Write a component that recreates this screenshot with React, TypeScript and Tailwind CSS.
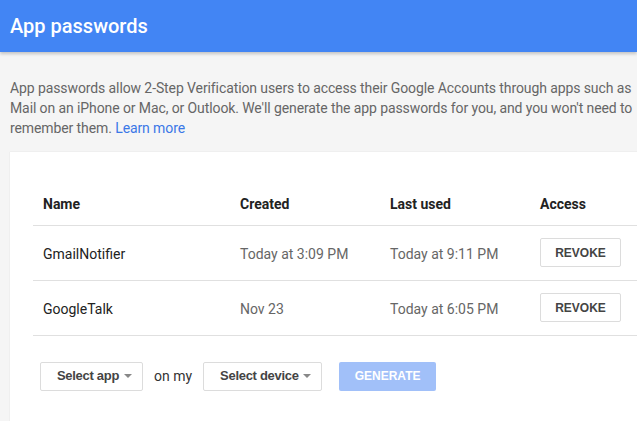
import React from 'react';

type Row = { name: string; created: string; lastUsed: string };

const rows: Row[] = [
  { name: 'GmailNotifier', created: 'Today at 3:09 PM', lastUsed: 'Today at 9:11 PM' },
  { name: 'GoogleTalk', created: 'Nov 23', lastUsed: 'Today at 6:05 PM' },
];

const Caret: React.FC = () => (
  <span className="inline-block w-0 h-0 border-l-[4px] border-r-[4px] border-t-[4px] border-l-transparent border-r-transparent border-t-[#888]"></span>
);

const SelectBox: React.FC<{ label: string; width: string }> = ({ label, width }) => (
  <button className={`${width} h-[29px] flex items-center justify-between pl-[16px] pr-[10px] bg-white border border-[#dcdcdc] rounded-[2px] text-[13px] tracking-[-0.3px] font-bold text-[#444] font-['Liberation_Sans',Arial,sans-serif]`}>
    {label}
    <Caret />
  </button>
);

const App: React.FC = () => {
  return (
    <div className="w-[637px] h-[421px] overflow-hidden bg-[#f5f5f5] font-['Roboto',sans-serif]">
      <header className="h-[52px] bg-[#4285f4] flex items-center px-[10px] shadow-[0_2px_3px_rgba(0,0,0,0.2)] relative">
        <h1 className="text-white text-[20px] font-medium">App passwords</h1>
      </header>

      <p className="mt-[26px] px-[10px] text-[14px] leading-[20px] tracking-[-0.1px] text-[#666] whitespace-nowrap">
        <span className="block">App passwords allow 2-Step Verification users to access their Google Accounts through apps such as</span>
        <span className="block">Mail on an iPhone or Mac, or Outlook. We'll generate the app passwords for you, and you won't need to</span>
        <span className="block">remember them. <a className="text-[#3b78e7]">Learn more</a></span>
      </p>

      <div className="ml-[10px] mt-[14px] w-[700px] bg-white pt-[31px] pl-[23px] pb-[30px] shadow-[0_0_1px_rgba(0,0,0,0.15)]">
        <table className="w-[660px] table-fixed text-[14px] text-left border-collapse">
          <colgroup>
            <col className="w-[197px]" />
            <col className="w-[150px]" />
            <col className="w-[150px]" />
            <col />
          </colgroup>
          <thead>
            <tr className="h-[42px] border-b border-[#e0e0e0] text-[#222]">
              <th className="pl-[10px] pt-[2px] font-bold">Name</th>
              <th className="pl-[10px] pt-[2px] font-bold">Created</th>
              <th className="pl-[10px] pt-[2px] font-bold">Last used</th>
              <th className="pl-[10px] pt-[2px] font-bold">Access</th>
            </tr>
          </thead>
          <tbody>
            {rows.map(r => (
              <tr key={r.name} className="h-[55px] border-b border-[#e0e0e0]">
                <td className="pl-[10px] pt-[3px] text-[#222]">{r.name}</td>
                <td className="pl-[10px] pt-[3px] text-[#666]">{r.created}</td>
                <td className="pl-[10px] pt-[3px] text-[#666]">{r.lastUsed}</td>
                <td className="pl-[10px]">
                  <button className="w-[81px] h-[29px] bg-white border border-[#dcdcdc] rounded-[2px] text-[12px] font-bold text-[#444] font-['Liberation_Sans',Arial,sans-serif]">
                    REVOKE
                  </button>
                </td>
              </tr>
            ))}
          </tbody>
        </table>

        <div className="mt-[26px] flex items-center pl-[7px]">
          <SelectBox label="Select app" width="w-[103px]" />
          <span className="mx-[11px] text-[14px] text-[#333]">on my</span>
          <SelectBox label="Select device" width="w-[119px]" />
          <button className="ml-[17px] w-[97px] h-[29px] bg-[#a1c0f9] rounded-[2px] text-white text-[12px] font-bold font-['Liberation_Sans',Arial,sans-serif]">
            GENERATE
          </button>
        </div>
      </div>
    </div>
  );
};

export default App;
